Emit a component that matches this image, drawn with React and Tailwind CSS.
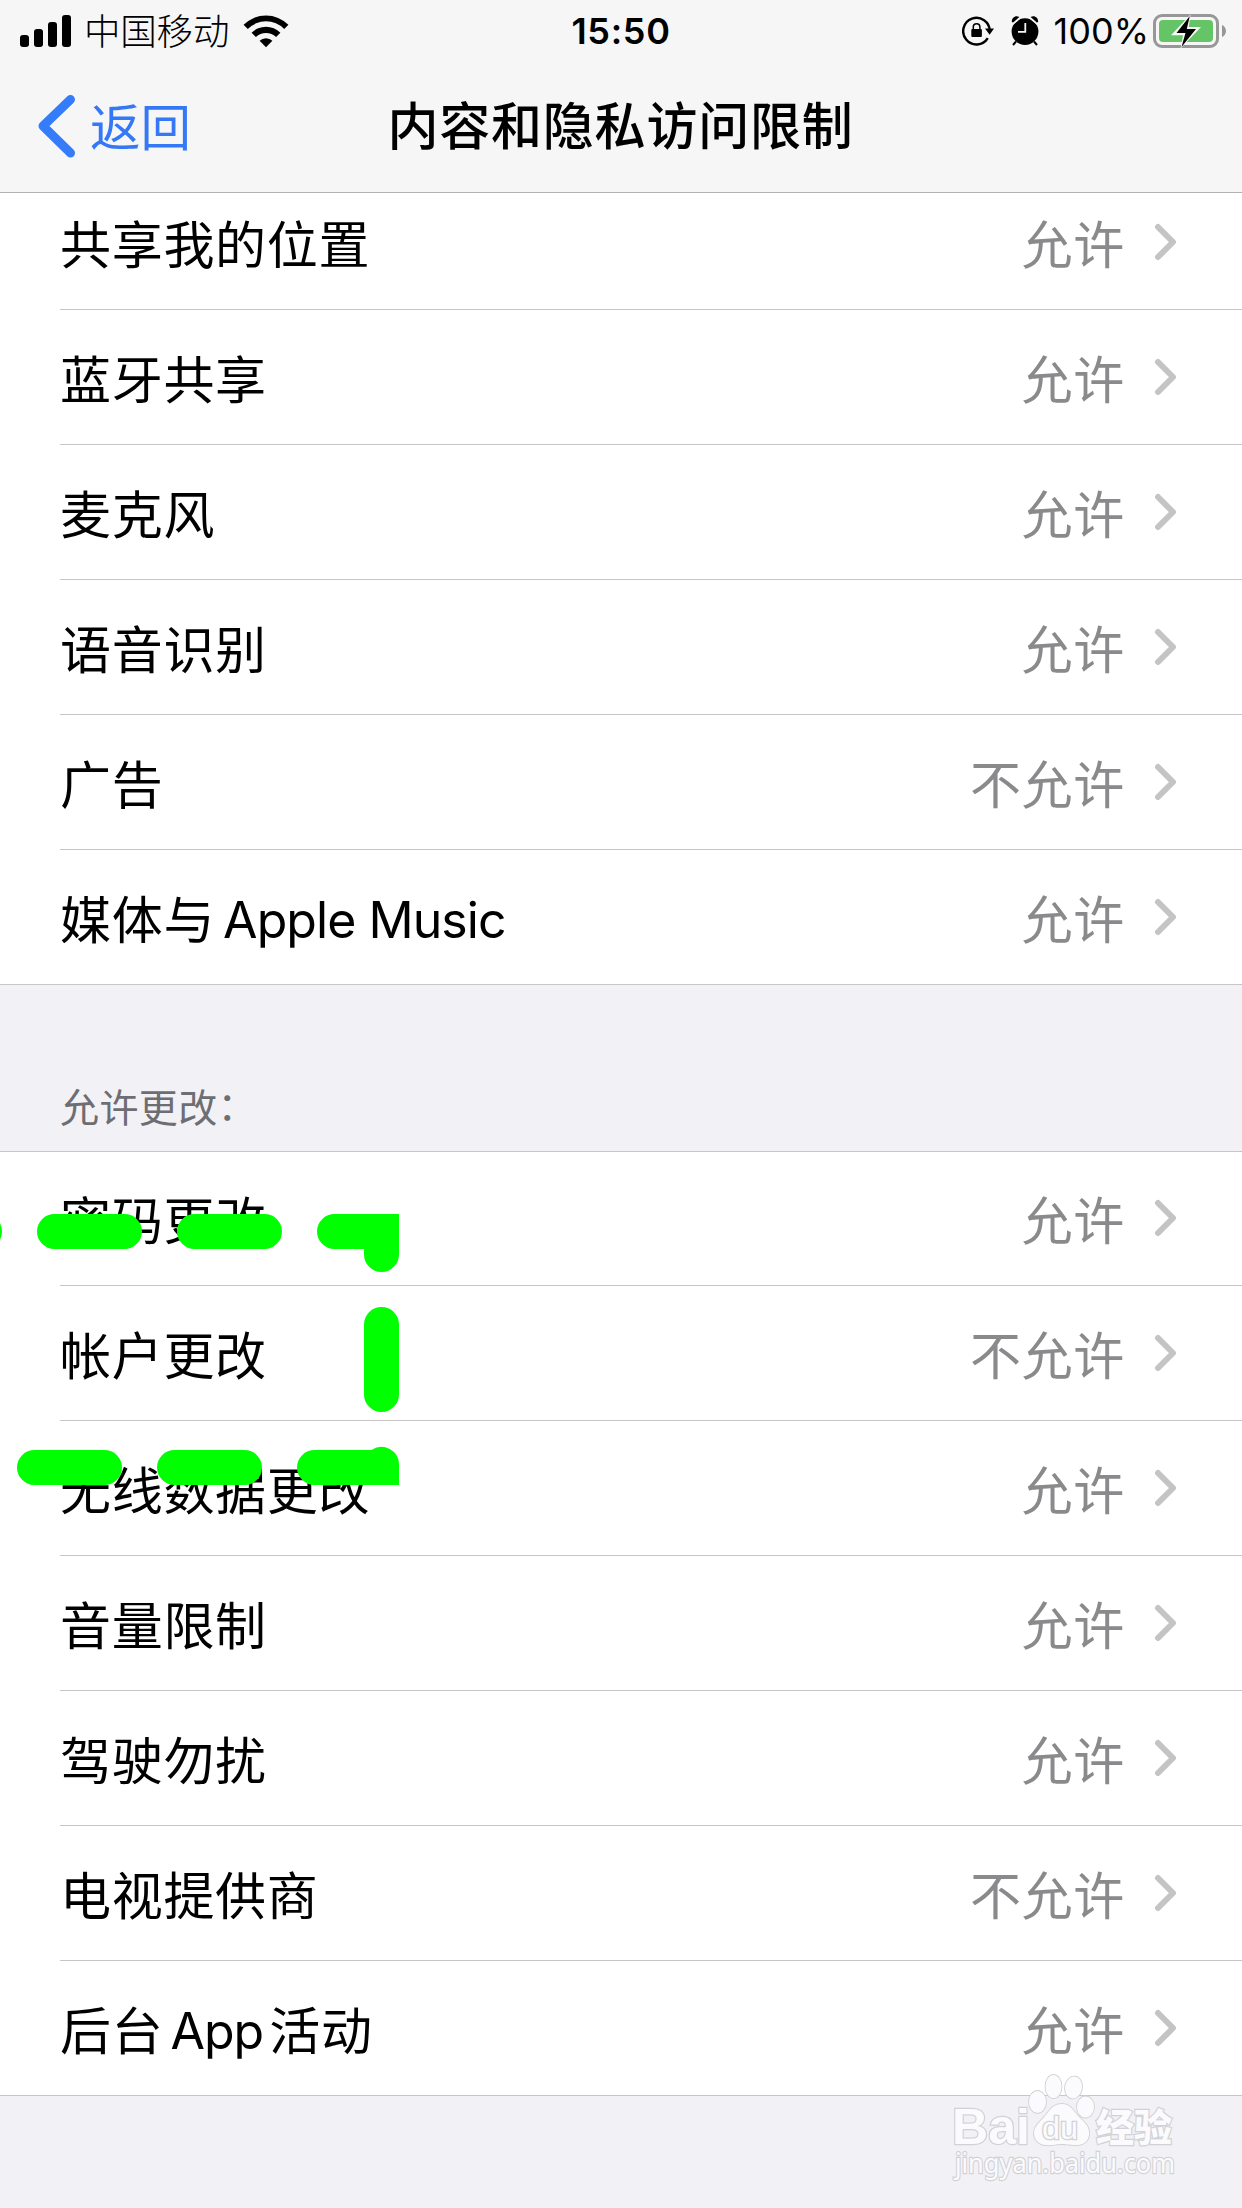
const CJK = "font-['Noto_Sans_CJK_SC',sans-serif]";

function Latin({ children, className }) {
  return (
    <span className={`relative -top-px font-['Inter',sans-serif] text-[50px] leading-none tracking-[-0.95px] ${className || ""}`}>
      {children}
    </span>
  );
}

const privacy = [
  ["共享我的位置", "允许"],
  ["蓝牙共享", "允许"],
  ["麦克风", "允许"],
  ["语音识别", "允许"],
  ["广告", "不允许"],
  [
    <>
      媒体与
      <Latin className="ml-[8px]">Apple Music</Latin>
    </>,
    "允许",
  ],
];

const changes = [
  ["密码更改", "允许"],
  ["帐户更改", "不允许"],
  ["无线数据更改", "允许"],
  ["音量限制", "允许"],
  ["驾驶勿扰", "允许"],
  ["电视提供商", "不允许"],
  [
    <>
      后台
      <Latin className="ml-[7px] mr-[6px]">App</Latin>
      活动
    </>,
    "允许",
  ],
];

function Row({ label, value, last }) {
  return (
    <li className={`flex h-[135px] shrink-0 border-[#c6c6c8] ${last ? "border-b" : "pl-[60px]"}`}>
      <div
        className={`flex flex-1 items-center pr-[65px] text-[51px] leading-[100px] tracking-[0.7px] border-[#c6c6c8] ${
          last ? "pl-[60px]" : "border-b"
        }`}
      >
        <span className="flex-1 whitespace-nowrap text-black">{label}</span>
        <span className="mr-[28px] text-[#8a8a8d]">{value}</span>
        <svg width="24" height="40" viewBox="0 0 24 40" fill="none" stroke="#c4c4c6" strokeWidth="6" strokeLinecap="round" strokeLinejoin="round">
          <path d="M5 5 L20 20 L5 35" />
        </svg>
      </div>
    </li>
  );
}

function Signal() {
  return (
    <div className="flex h-8 items-end gap-[5px]">
      <i className="h-3 w-[9px] rounded-[3px] bg-black" />
      <i className="h-[18px] w-[9px] rounded-[3px] bg-black" />
      <i className="h-[25px] w-[9px] rounded-[3px] bg-black" />
      <i className="h-8 w-[9px] rounded-[3px] bg-black" />
    </div>
  );
}

function Wifi() {
  return (
    <svg width="46" height="34" viewBox="0 0 46 34">
      <path d="M0.6 10.8 A31.5 31.5 0 0 1 45.4 10.8 L41.2 15 A25.5 25.5 0 0 0 4.8 15 Z" />
      <path d="M8.6 18.8 A20.3 20.3 0 0 1 37.4 18.8 L33.1 23.1 A14.3 14.3 0 0 0 12.9 23.1 Z" />
      <path d="M16.6 26.8 A9 9 0 0 1 29.4 26.8 L23 33.2 Z" />
    </svg>
  );
}

function RotationLock() {
  return (
    <svg width="32" height="30" viewBox="0 0 32 30">
      <path d="M25.8 22.2 A13.3 13.3 0 1 1 27.8 15" fill="none" stroke="#000" strokeWidth="2.4" />
      <path d="M23 12.6 H32 L27.6 18.8 Z" />
      <rect x="9.3" y="13" width="10.6" height="8" rx="1" />
      <path d="M11.3 13.5 V11 a3.3 3.3 0 0 1 6.6 0 V13.5" fill="none" stroke="#000" strokeWidth="1.5" />
    </svg>
  );
}

function Alarm() {
  return (
    <svg width="28" height="30" viewBox="0 0 28 30">
      <circle cx="14" cy="15.6" r="13.4" />
      <path d="M0 7.5 L9 0 L10.5 1.8 L2 9 Z M28 7.5 L19 0 L17.5 1.8 L26 9 Z" fill="#f6f6f6" />
      <path d="M0.8 6 C0.8 1.4 4.6 -1 8.4 1 L2.2 6.6 Z M27.2 6 C27.2 1.4 23.4 -1 19.6 1 L25.8 6.6 Z" />
      <path d="M5 25.5 L2 29 M23 25.5 L26 29" stroke="#000" strokeWidth="2" />
      <path d="M14.3 7 V15.8 H7" fill="none" stroke="#f6f6f6" strokeWidth="1.8" />
    </svg>
  );
}

function Battery() {
  return (
    <svg width="74" height="36" viewBox="0 0 74 36">
      <rect x="1.5" y="2.5" width="63" height="31" rx="7.5" fill="none" stroke="#979797" strokeWidth="3" />
      <rect x="6" y="7" width="54" height="22" rx="4" fill="#65c466" />
      <path d="M69 12 C74.3 14 74.3 22 69 24 Z" fill="#979797" />
      <path d="M37.5 1.5 L18 22.2 H30 L27.5 35.5 L48 14 H35.8 Z" fill="#f7f7f7" />
      <path d="M36.8 3 L23.5 20 H32.5 L28.5 34 L43 16 H33.8 Z" fill="#000" />
    </svg>
  );
}

function Marks() {
  return (
    <svg className="absolute left-0 top-[1214px]" width="400" height="272" viewBox="0 0 400 272" fill="#00ff00">
      <rect x="-103" y="0" width="105" height="35" rx="17.5" />
      <rect x="37" y="0" width="105" height="35" rx="17.5" />
      <rect x="177" y="0" width="105" height="35" rx="17.5" />
      <path d="M334.5 0 H399 V40.5 A17.5 17.5 0 0 1 364 40.5 V35 H334.5 A17.5 17.5 0 0 1 334.5 0 Z" />
      <rect x="364" y="93" width="35" height="105" rx="17.5" />
      <rect x="17" y="236" width="105" height="35" rx="17.5" />
      <rect x="157" y="236" width="105" height="35" rx="17.5" />
      <path d="M314.5 236 H371.5 A17.5 17.5 0 0 1 399 250.5 V271 H314.5 A17.5 17.5 0 0 1 314.5 236 Z" />
    </svg>
  );
}

function Watermark() {
  return (
    <svg className="absolute left-[948px] top-[2070px]" width="240" height="116" viewBox="0 0 240 116" fill="#fbfbfd" stroke="#d2d2d6" strokeWidth="2.4" paintOrder="stroke">
      <text x="4" y="74" fontFamily="Liberation Sans, sans-serif" fontWeight="700" fontSize="50" textLength="78" lengthAdjust="spacingAndGlyphs">Bai</text>
      <g strokeWidth="1.8">
        <ellipse cx="89.5" cy="32" rx="8.5" ry="11" />
        <ellipse cx="105.5" cy="16.5" rx="8" ry="11.5" />
        <ellipse cx="125.5" cy="17.5" rx="8.5" ry="11" transform="rotate(10 125.5 17.5)" />
        <ellipse cx="137.5" cy="37" rx="8.5" ry="10.5" />
        <path d="M114 34 C122 34 125 40 130 46 C136 52 142 56 141 65 C140 73 134 75 128 75 C120 75 118 74 113 74 C107 74 104 76 98 75 C91 75 86 70 86 63 C86 56 92 52 97 46 C102 40 105 34 114 34 Z" />
      </g>
      <text x="94" y="69" fontFamily="Liberation Sans, sans-serif" fontWeight="400" fontSize="31" textLength="36" lengthAdjust="spacingAndGlyphs" strokeWidth="2.6">du</text>
      <text x="148" y="71" fontFamily="Noto Sans CJK SC, sans-serif" fontWeight="900" fontSize="38">经验</text>
      <text x="7" y="103" fontFamily="Noto Sans, sans-serif" fontSize="27" textLength="220" lengthAdjust="spacingAndGlyphs">jingyan.baidu.com</text>
    </svg>
  );
}

export default function App() {
  return (
    <div className={`relative flex h-[2208px] w-[1242px] flex-col overflow-hidden bg-[#f2f1f6] text-black ${CJK}`}>
      <header className="h-[193px] shrink-0 border-b border-[#b2b2b3] bg-[#f6f6f6]">
        <div className="grid h-[60px] grid-cols-3 items-center pl-5 pr-[15px]">
          <div className="flex items-center">
            <Signal />
            <span className="ml-[13px] pb-[2px] text-[36.5px] font-light leading-[58px] tracking-[-0.2px]">中国移动</span>
            <div className="ml-[14px]"><Wifi /></div>
          </div>
          <time className="pr-[5px] text-center font-['Inter',sans-serif] text-[36px] font-semibold leading-[60px] tracking-[0.7px]">15:50</time>
          <div className="flex items-center justify-end">
            <RotationLock />
            <div className="ml-[17px]"><Alarm /></div>
            <span className="ml-[15px] mr-[4px] pt-px font-['Inter',sans-serif] text-[36px] leading-[60px]">100%</span>
            <Battery />
          </div>
        </div>
        <div className="grid h-[132px] grid-cols-[300px_1fr_300px] items-center">
          <div className="flex h-[132px] items-start pl-[37px] pt-[34px] text-[#3478f6]">
            <svg width="38" height="64" viewBox="0 0 38 64" fill="none" stroke="#347cf9" strokeWidth="9" strokeLinecap="round" strokeLinejoin="round">
              <path d="M33.5 5.5 L6 32 L33.5 59" />
            </svg>
            <span className="ml-[15px] text-[50.5px] leading-[60px]">返回</span>
          </div>
          <h1 className="h-[132px] whitespace-nowrap pt-[33px] pr-px text-center text-[51px] font-medium leading-[60px] tracking-[0.8px]">内容和隐私访问限制</h1>
        </div>
      </header>

      <ul className="flex h-[792px] shrink-0 flex-col justify-end bg-white">
        {privacy.map(([label, value], i) => (
          <Row key={i} label={label} value={value} last={i === privacy.length - 1} />
        ))}
      </ul>

      <h2 className="flex h-[167px] shrink-0 items-end border-b border-[#c6c6c8] pb-[16px] pl-[60px] text-[39px] font-normal leading-[60px] tracking-[0.4px] text-[#6d6d72]">
        允许更改
        <span className="relative -top-[2px]">：</span>
      </h2>

      <ul className="flex h-[944px] shrink-0 flex-col justify-end bg-white">
        {changes.map(([label, value], i) => (
          <Row key={i} label={label} value={value} last={i === changes.length - 1} />
        ))}
      </ul>

      <Marks />
      <Watermark />
    </div>
  );
}
